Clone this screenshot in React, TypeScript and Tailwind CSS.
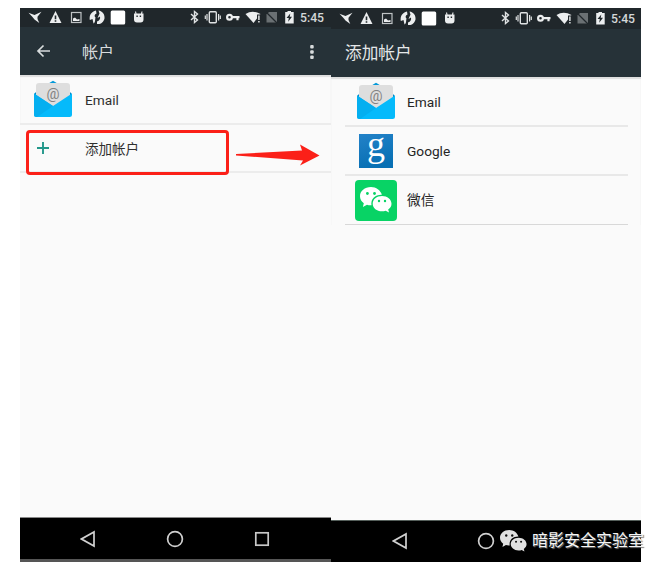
import React from "react";

const STATUS_ICONS: React.ReactNode[] = [
  <path key="bird" d="M8.500 4.800 14.500 7 21.500 3.800 17.500 8.800 17.500 11 19.300 15 14.500 11.500 12.500 9Z" />,
  <path key="warn" fillRule="evenodd" d="M35.500 3 41.500 15H29.500ZM34.700 7.500V11.200H36.300V7.500ZM34.700 12.200V13.700H36.300V12.200Z" />,
  <g key="image">
    <rect x="51.500" y="4.500" width="9.500" height="10" fill="none" stroke="#bfc3c5" strokeWidth="1.200" />
    <path d="M53 13V10.500L55 9.500 57 11.500 59.500 11V13Z" />
  </g>,
  <g key="globe">
    <path d="M76 2.500C71.500 3.500 69 7 69.800 12L72.500 11 73.500 15.500C75.500 14.500 75 11.500 75.500 9.500 74 8.500 74.500 6 76.500 5.500Z" />
    <path d="M78.500 2.500C82.500 3 85 6.500 84.500 10.500 83.500 14 81 16.500 77 16L77 13.500C79.500 12.500 80.500 11 80 8.500L77.500 10 79.500 5.500Z" />
  </g>,
  <rect key="square" x="90.700" y="2.500" width="14.500" height="14" rx="1.500" fill="#fff" />,
  <g key="robot">
    <path fillRule="evenodd" d="M114 5.500H123.500V11.500Q123.500 14.500 120.500 14.500H117Q114 14.500 114 11.500ZM116.400 7.500V9H117.800V7.500ZM119.700 7.500V9H121.100V7.500Z" />
    <path d="M116 6 115.500 3.500M121.500 6 122 3.500" stroke="#e6e8e9" strokeWidth="1.200" />
  </g>,
  <path key="bluetooth" d="M171 6 177.500 12 174.500 14.500V3.500L177.500 6 171 12" fill="none" stroke="#dfe2e3" strokeWidth="1.400" />,
  <g key="vibrate" fill="none" stroke="#dfe2e3">
    <rect x="189.300" y="3.700" width="7" height="11" rx="1" strokeWidth="1.400" />
    <path d="M187 6V12.500M198.600 6V12.500M185.300 7.500V11M200.300 7.500V11" strokeWidth="1.200" />
  </g>,
  <g key="key" fill="none" stroke="#eceeef" strokeWidth="2.200">
    <circle cx="209.500" cy="9.200" r="2.400" />
    <path d="M212 9.200H219.500M217.500 9V12.200" />
  </g>,
  <g key="wifi">
    <path d="M225.500 6Q232.500 1.500 240.500 6L233.500 15Z" />
    <path d="M237 6.500H240.500V15H237Z" fill="#20272b" />
    <path d="M238.200 7.500H239.600V12H238.200ZM238.200 13H239.600V14.500H238.200Z" />
  </g>,
  <g key="sim">
    <path d="M249 4H257V14.500H246.500V6.500Z" fill="#6a7073" />
    <path d="M246 4 257 15" stroke="#20272b" strokeWidth="1.300" />
  </g>,
  <path key="battery" fillRule="evenodd" d="M267.500 3H271V4H273.700V15.500H265.200V4H267.500ZM270.300 5.500 266.500 10H268.800L268.200 13.800 272 8.800H269.700Z" />,
];

function StatusBar({ tall }: { tall?: boolean }) {
  return (
    <div className={`${tall ? "h-[21px]" : "h-[19px]"} flex w-full shrink-0 items-center bg-[#20272b]`}>
      <svg width="280" height="19" viewBox="0 0 280 19" fill="#eceeef" className="shrink-0">
        {STATUS_ICONS}
      </svg>
      <span className="pt-0.5 font-['Roboto',sans-serif] text-[12.200px] font-medium leading-none text-[#d4d7d9]">5:45</span>
    </div>
  );
}

function EmailIcon() {
  return (
    <svg width="40" height="38" viewBox="0 0 40 38" className="shrink-0">
      <path d="M15.500 3.500 20 0.700 24.500 3.500Z" fill="#0499d8" />
      <path d="M1 14 4 11V20ZM39 14 36 11V20Z" fill="#0287c4" />
      <rect x="3" y="3" width="34" height="27" rx="3" fill="#dedede" />
      <path d="M1 13.500 20 26 39 13.500V34.500Q39 37 36.500 37H3.500Q1 37 1 34.500Z" fill="#05bafb" />
      <path d="M20 26 4 37H3.500Q1 37 1 34.500V13.500Z" fill="#04aff0" />
      <text x="20" y="19" textAnchor="middle" className="font-['Roboto',sans-serif] text-[14.500px]" fill="#828282">@</text>
    </svg>
  );
}

function WechatGlyph({ eye, className }: { eye: string; className?: string }) {
  return (
    <svg viewBox="0 0 32 26" fill="currentColor" className={className}>
      <path d="M11 0C4.700 0 0 4.100 0 9.200 0 12 1.400 14.500 3.800 16.300L2.900 20 7 17.800Q9 18.500 11.500 18.300C10.500 12 15 7.500 21.900 7.700 20.500 3.300 16.200 0 11 0Z" />
      <path d="M22 9C16.700 9 12.700 12.400 12.700 16.700S16.700 24.300 22 24.300Q24 24.300 25.700 23.700L29 25.500 28.200 22.500C30.400 21 31.500 19 31.500 16.700 31.500 12.400 27.300 9 22 9Z" />
      <g fill={eye}>
        <circle cx="7.400" cy="6.500" r="1.400" />
        <circle cx="14.500" cy="6.500" r="1.400" />
        <circle cx="19" cy="14" r="1.200" />
        <circle cx="25" cy="14" r="1.200" />
      </g>
    </svg>
  );
}

function GoogleIcon() {
  return (
    <svg width="34" height="34" viewBox="0 0 34 34" className="shrink-0 overflow-visible">
      <defs>
        <linearGradient id="google-blue" x2="0.300" y2="1">
          <stop stopColor="#2382c8" />
          <stop offset="1" stopColor="#0870b4" />
        </linearGradient>
      </defs>
      <rect width="34" height="34" fill="url(#google-blue)" />
      <text x="17" y="22.300" textAnchor="middle" className="font-['Liberation_Serif',serif] text-[36px]" fill="#fff">g</text>
    </svg>
  );
}

function Back() {
  return <svg width="16" height="18" viewBox="0 0 16 18" className="shrink-0"><path d="M14 2V16L1.500 9Z" fill="none" stroke="#d0d0d0" strokeWidth="1.700" /></svg>;
}

function Home() {
  return <svg width="18" height="18" viewBox="0 0 18 18" className="shrink-0"><circle cx="9" cy="9" r="7.400" fill="none" stroke="#d0d0d0" strokeWidth="1.700" /></svg>;
}

export default function App() {
  return (
    <div className="h-[571px] w-[666px] bg-white pl-5 pt-2 font-['Roboto','Noto_Sans_CJK_SC',sans-serif]">
      <div className="flex h-[554px]">
        <section className="flex w-[311px] shrink-0 flex-col bg-[#fafafa]">
          <StatusBar />
          <header className="flex h-12 shrink-0 items-center bg-[#263238] pl-4 pr-4 text-[#d8dcdd]">
            <svg width="15" height="14" viewBox="0 0 15 14" fill="none" stroke="currentColor" strokeWidth="1.700">
              <path d="M14 7H2M7.500 1.500 2 7 7.500 12.500" />
            </svg>
            <h1 className="ml-[31px] pt-[3px] text-[16px] leading-none">帐户</h1>
            <svg width="6" height="16" viewBox="0 0 6 16" fill="currentColor" className="ml-auto mt-0.5">
              <rect x="1.200" y="1" width="3.500" height="3.500" rx="1" />
              <rect x="1.200" y="6.200" width="3.500" height="3.500" rx="1" />
              <rect x="1.200" y="11.500" width="3.500" height="3.500" rx="1" />
            </svg>
          </header>
          <div className="flex h-[50px] shrink-0 items-center border-b-2 border-[#ececec] pl-[13px] shadow-[inset_0_2px_1px_#dedede]">
            <EmailIcon />
            <span className="ml-3 pt-1 text-[13.700px] leading-none text-[#2f2f2f]">Email</span>
          </div>
          <div className="relative flex h-12 shrink-0 items-center border-b-2 border-[#ececec] pl-4">
            <svg width="14" height="14" viewBox="0 0 14 14"><path d="M7 1V13M1 7H13" stroke="#22978a" strokeWidth="1.900" /></svg>
            <span className="ml-[35px] pt-[3px] text-[13.500px] leading-none text-[#2f2f2f]">添加帐户</span>
            <div className="absolute left-[6px] top-[5px] h-[45px] w-[203px] rounded-[4px] border-3 border-[#fb2018]" />
            <svg width="86" height="24" viewBox="0 0 86 24" className="absolute left-[215px] top-[19px]">
              <path d="M1 10 67 6.500 65 0.500 84.500 11.500 65 21.500 68 16.500 1 11.500Z" fill="#fb2018" />
            </svg>
          </div>
          <footer className="mt-auto flex h-[45px] items-center border-b-3 border-t border-b-[#555] border-t-[#888] bg-black pl-[60px]">
            <Back />
            <span className="ml-[70px]"><Home /></span>
            <svg width="16" height="16" viewBox="0 0 16 16" className="ml-[70px]"><rect x="1.800" y="1.800" width="12.400" height="12.400" fill="none" stroke="#c8c8c8" strokeWidth="1.700" /></svg>
          </footer>
        </section>

        <section className="flex w-[310px] shrink-0 flex-col bg-[#fafafa]">
          <StatusBar tall />
          <header className="flex h-12 shrink-0 items-center bg-[#263238] pl-[14px] text-[#e4e7e8]">
            <h1 className="pt-[3px] text-[16.700px] leading-none">添加帐户</h1>
          </header>
          <div className="flex flex-col pl-[14px] pr-[13px] text-[13.700px] leading-none text-[#252525] shadow-[inset_0_2px_1px_#dedede]">
            <div className="flex h-[49.500px] items-center border-b-2 border-[#e8e8e8] pl-[11px]">
              <EmailIcon />
              <span className="ml-[11px] pt-1">Email</span>
            </div>
            <div className="flex h-[49px] items-center border-b-2 border-[#e8e8e8] pl-[14px]">
              <span className="flex pt-px"><GoogleIcon /></span>
              <span className="ml-[14px] pt-[3px]">Google</span>
            </div>
            <div className="flex h-[49.500px] items-center border-b border-[#d8d8d8] pl-[10px]">
              <span className="mt-px flex h-[41px] w-[42px] items-center justify-center rounded-[4px] bg-[#08d365] text-white">
                <WechatGlyph eye="#08d365" className="h-[26px] w-8" />
              </span>
              <span className="ml-[10px] pt-[3px]">微信</span>
            </div>
          </div>
          <footer className="mt-auto flex h-[42px] items-center border-t border-[#555f5b] bg-black pb-px pl-[61px]">
            <Back />
            <span className="ml-[69px] flex"><Home /></span>
            <WechatGlyph eye="#111" className="ml-[5px] h-[22px] w-[27px] shrink-0 text-[#e1e1e1]" />
            <span className="ml-[5px] shrink-0 whitespace-nowrap text-[16px] leading-none text-[#f5f5f5] [text-shadow:1px_1px_1px_#777]">暗影安全实验室</span>
          </footer>
        </section>
      </div>
    </div>
  );
}
